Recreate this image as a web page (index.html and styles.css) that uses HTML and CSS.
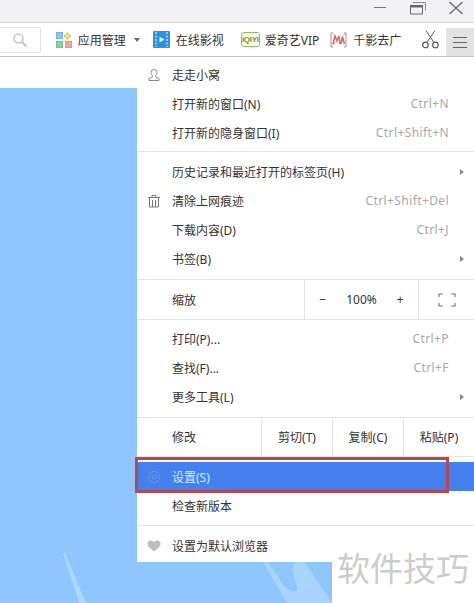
FILE: index.html
```html
<!doctype html>
<html lang="zh-CN">
  <head>
    <meta charset="UTF-8" />
    <title>设置</title>
    <link rel="stylesheet" href="styles.css">
  </head>

  <body>
    <div class="window">
      <div class="titlebar">
        <svg class="win-min" width="12" height="14" viewBox="0 0 12 14"><path d="M0 6.500h12" stroke="#777" stroke-width="1"/></svg>
        <svg class="win-max" width="16" height="14" viewBox="0 0 16 14"><path d="M3 1.500h12.500v8" fill="none" stroke="#888"/><path d="M.5 4.500h12v8.500H.5z" fill="#f2f2f4" stroke="#666"/><path d="M0 5.500h13" stroke="#666" stroke-width="2"/></svg>
        <svg class="win-close" width="14" height="14" viewBox="0 0 14 14"><path d="M.5 1l13 12M13.500 1L.5 13" stroke="#666" stroke-width="1.200" fill="none"/></svg>
      </div>

      <div class="toolbar">
        <div class="search-box">
          <svg width="16" height="16" viewBox="0 0 16 16"><circle cx="6.500" cy="6.500" r="4.500" fill="none" stroke="#c4c4c4" stroke-width="1.500"/><path d="M10 10l4.500 4.500" stroke="#c4c4c4" stroke-width="2"/></svg>
        </div>

        <div class="tool tool-apps">
          <svg width="16" height="16" viewBox="0 0 16 16">
            <rect x="0.300" y="0.300" width="6.500" height="6.500" fill="#8cc4ee" stroke="#5a9fd4" stroke-width=".6"/>
            <path d="M11.500 0.500l1.400 2.100 2.100 1.400-2.100 1.400-1.400 2.100-1.400-2.100-2.100-1.400 2.100-1.400z" fill="#f6e27a" stroke="#d4b63c" stroke-width=".8"/>
            <rect x="0.300" y="9.200" width="6.500" height="6.500" fill="#7fd6a2" stroke="#55b07d" stroke-width=".6"/>
            <rect x="9.200" y="9.200" width="6.500" height="6.500" fill="#f0a592" stroke="#d98470" stroke-width=".6"/>
          </svg>
          <span>应用管理</span>
          <i class="caret"></i>
        </div>

        <div class="tool tool-video">
          <svg width="17" height="17" viewBox="0 0 17 17">
            <rect width="17" height="17" rx="1" fill="#2b93dd"/>
            <path d="M3 1v15M14 1v15" stroke="#fff" stroke-width="1" stroke-dasharray="2 1.500"/>
            <path d="M6.500 5.500l5 3-5 3z" fill="#d5eefc"/>
          </svg>
          <span>在线影视</span>
        </div>

        <div class="tool tool-iqiyi">
          <span class="iqiyi-logo">iQIYI</span>
          <span>爱奇艺VIP</span>
        </div>

        <div class="tool tool-ad">
          <svg width="17" height="16" viewBox="0 0 17 16">
            <path d="M3 1H1v14h2M14 1h2v14h-2" fill="none" stroke="#999" stroke-width="1"/>
            <path d="M3 12l2-8 2 5 2-5 1 8M11 12l1.500-7 2 7" fill="none" stroke="#d46a6a" stroke-width="1.600"/>
            <path d="M2 14L15 2" stroke="#bbb" stroke-width="1"/>
          </svg>
          <span>千影去广</span>
        </div>

        <svg class="scissors" width="17" height="19" viewBox="0 0 17 19">
          <path d="M5 12.500L13 0.500M12 12.500L4 0.500" fill="none" stroke="#555" stroke-width="1"/>
          <circle cx="3.500" cy="15" r="2.800" fill="none" stroke="#555" stroke-width="1.200"/>
          <circle cx="13.500" cy="15" r="2.800" fill="none" stroke="#555" stroke-width="1.200"/>
        </svg>

        <div class="menu-btn">
          <svg width="16" height="12" viewBox="0 0 16 12"><path d="M1 1.500h14M1 6.500h14M1 11.500h14" stroke="#666" stroke-width="1"/></svg>
        </div>
      </div>

      <div class="content">
        <svg class="skyline" width="474" height="60" viewBox="0 0 474 60">
          <path d="M63 10l2 0 21 50h-7z" fill="#b5dcff" opacity=".75"/>
          <path d="M263 19h5l15 23 9 7 6-2-6-22 4-6h9l8 13 19 28h-45z" fill="#a9d4ff"/>
        </svg>
      </div>
    </div>

    <div class="menu">
      <div class="section section-first">
        <div class="row">
          <svg class="row-icon" width="14" height="14" viewBox="0 0 14 14"><path d="M7 1.500a3 3 0 0 1 3 3c0 1.500-.8 2.700-1.500 3.300v1l3.500 1.700v2H2v-2l3.500-1.700v-1C4.800 7.200 4 6 4 4.500a3 3 0 0 1 3-3z" fill="none" stroke="#888" stroke-width="1"/></svg>
          <span class="label">走走小窝</span>
        </div>
        <div class="row"><span class="label">打开新的窗口(N)</span><span class="keys">Ctrl+N</span></div>
        <div class="row"><span class="label">打开新的隐身窗口(I)</span><span class="keys">Ctrl+Shift+N</span></div>
      </div>

      <div class="section section-history">
        <div class="row"><span class="label">历史记录和最近打开的标签页(H)</span><i class="sub-arrow"></i></div>
        <div class="row">
          <svg class="row-icon" width="14" height="14" viewBox="0 0 14 14"><path d="M1 3.500h12M5 3.500V1.500h4v2M2.500 3.500v9.500h9V3.500M5.500 6v7M8.500 6v7" fill="none" stroke="#777" stroke-width="1"/></svg>
          <span class="label">清除上网痕迹</span><span class="keys">Ctrl+Shift+Del</span>
        </div>
        <div class="row"><span class="label">下载内容(D)</span><span class="keys">Ctrl+J</span></div>
        <div class="row"><span class="label">书签(B)</span><i class="sub-arrow"></i></div>
      </div>

      <div class="split-row zoom-row">
        <span class="label split-label">缩放</span>
        <div class="zoom-ctl"><span>−</span><span class="zoom-val">100%</span><span>+</span></div>
        <div class="zoom-full">
          <svg width="18" height="14" viewBox="0 0 18 14"><path d="M1 4V1h4M13 1h4v3M1 10v3h4M13 13h4v-3" fill="none" stroke="#777" stroke-width="1.200"/></svg>
        </div>
      </div>

      <div class="section section-tools">
        <div class="row"><span class="label">打印(P)...</span><span class="keys">Ctrl+P</span></div>
        <div class="row"><span class="label">查找(F)...</span><span class="keys">Ctrl+F</span></div>
        <div class="row"><span class="label">更多工具(L)</span><i class="sub-arrow"></i></div>
      </div>

      <div class="split-row edit-row">
        <span class="label split-label">修改</span>
        <div class="edit-btn">剪切(T)</div>
        <div class="edit-btn">复制(C)</div>
        <div class="edit-btn">粘贴(P)</div>
      </div>

      <div class="section section-settings">
        <div class="row row-active">
          <svg class="row-icon" width="14" height="14" viewBox="0 0 14 14"><circle cx="7" cy="7" r="5.500" fill="none" stroke="#6f8fc8" stroke-width="1.300"/><circle cx="7" cy="7" r="2" fill="none" stroke="#6f8fc8" stroke-width="1.200"/></svg>
          <span class="label">设置(S)</span>
        </div>
        <div class="row"><span class="label">检查新版本</span></div>
      </div>

      <div class="section section-last">
        <div class="row">
          <svg class="row-icon" width="14" height="12" viewBox="0 0 14 12"><path d="M7 11.500C3 8.500.5 6.500.5 3.800.5 1.800 2 .5 3.700.5 5 .5 6.300 1.200 7 2.300 7.700 1.200 9 .5 10.300.5 12 .5 13.500 1.800 13.500 3.800c0 2.700-2.500 4.700-6.500 7.700z" fill="#b9bccb"/></svg>
          <span class="label">设置为默认浏览器</span>
        </div>
      </div>
    </div>

    <div class="highlight"></div>
    <div class="watermark">软件技巧</div>
  </body>
</html>
```

FILE: styles.css
```css
html,
body {
  margin: 0;
  height: 100%;
  overflow: hidden;
}

body {
  position: relative;
  font-family: "Noto Sans", "Noto Sans CJK SC", sans-serif;
  font-size: 12px;
  color: #333;
  background-color: #fff;
}

.window {
  display: flex;
  flex-direction: column;
  height: 603px;
}

.titlebar {
  display: flex;
  justify-content: flex-end;
  align-items: flex-start;
  height: 23px;
  padding-top: 1px;
  padding-right: 11px;
  box-sizing: border-box;
  background-color: #f2f2f4;
  border-bottom: 1px solid #d8d8d8;
}

.win-min {
  margin-right: 24px;
}

.win-max {
  margin-right: 23px;
}

.toolbar {
  display: flex;
  align-items: center;
  height: 34px;
  box-sizing: border-box;
  background-color: #fff;
  border-bottom: 1px solid #c4c4c4;
  white-space: nowrap;
}

.search-box {
  display: flex;
  align-items: center;
  justify-content: flex-end;
  width: 41px;
  height: 26px;
  padding-right: 12px;
  box-sizing: border-box;
  border: 1px solid #e2e2e2;
  border-left: none;
  border-radius: 0 2px 2px 0;
}

.tool {
  display: flex;
  align-items: center;
}

.tool-apps {
  margin-left: 15px;
  gap: 6px;
}

.caret {
  width: 0;
  height: 0;
  margin-left: 2px;
  border-left: 3.500px solid transparent;
  border-right: 3.500px solid transparent;
  border-top: 4px solid #666;
}

.tool-video {
  margin-left: 13px;
  gap: 6px;
}

.tool-iqiyi {
  margin-left: 17px;
  gap: 5px;
}

.iqiyi-logo {
  width: 19px;
  height: 15px;
  line-height: 13px;
  text-align: center;
  overflow: hidden;
  font-family: "Liberation Sans", sans-serif;
  font-size: 8px;
  font-weight: bold;
  color: #5c9a1f;
  border: 1px solid #8cc63f;
  border-radius: 3px;
  box-sizing: border-box;
  letter-spacing: -0.3px;
}

.tool-ad {
  margin-left: 11px;
  gap: 6px;
}

.scissors {
  margin-left: 21px;
}

.menu-btn {
  display: flex;
  align-items: center;
  justify-content: center;
  width: 28px;
  height: 28px;
  margin-left: 7px;
  margin-top: 5px;
  background-color: #e2e2e2;
}

.content {
  flex: 1;
  position: relative;
  margin-top: 31px;
  background-color: #8fc6ff;
}

.skyline {
  position: absolute;
  left: 0;
  bottom: 0;
}

.menu {
  position: absolute;
  left: 137px;
  top: 57px;
  width: 337px;
  height: 505px;
  background-color: #fff;
  color: #333;
}

.section {
  border-bottom: 1px solid #e4e4e4;
}

.section-first {
  padding: 3px 0 4px;
}

.section-history {
  padding: 5px 0 6px;
}

.section-tools {
  padding: 4px 0 6px;
}

.section-settings {
  padding: 5px 0;
}

.section-last {
  padding-top: 5px;
  border-bottom: none;
}

.row {
  position: relative;
  display: flex;
  align-items: center;
  height: 29px;
  padding: 0 25px 0 35px;
}

.row-icon {
  position: absolute;
  left: 10px;
}

.label {
  flex: 1;
  white-space: nowrap;
}

.keys {
  color: #a8a8a8;
  letter-spacing: 0.4px;
  white-space: nowrap;
}

.sub-arrow {
  position: absolute;
  right: 10px;
  width: 0;
  height: 0;
  border-top: 3.500px solid transparent;
  border-bottom: 3.500px solid transparent;
  border-left: 4px solid #888;
}

.row-active {
  background-color: #4480ee;
  color: #d6ecff;
}

.split-row {
  display: flex;
  align-items: stretch;
  border-bottom: 1px solid #e4e4e4;
}

.split-label {
  display: flex;
  align-items: center;
  padding-left: 35px;
}

.zoom-row {
  height: 40px;
  box-sizing: border-box;
}

.zoom-ctl {
  display: flex;
  align-items: center;
  justify-content: center;
  gap: 20px;
  width: 114px;
  border-left: 1px solid #e4e4e4;
  box-sizing: border-box;
}

.zoom-full {
  display: flex;
  align-items: center;
  justify-content: center;
  width: 56px;
  border-left: 1px solid #e4e4e4;
  box-sizing: border-box;
}

.edit-row {
  height: 39px;
  box-sizing: border-box;
}

.edit-btn {
  display: flex;
  align-items: center;
  justify-content: center;
  width: 71px;
  border-left: 1px solid #e4e4e4;
  box-sizing: border-box;
  white-space: nowrap;
}

.highlight {
  position: absolute;
  left: 135px;
  top: 457px;
  width: 314px;
  height: 36px;
  box-sizing: border-box;
  border: 3px solid #b5474f;
}

.watermark {
  position: absolute;
  left: 332px;
  top: 548px;
  width: 142px;
  height: 55px;
  padding-left: 5px;
  box-sizing: border-box;
  background-color: #fff;
  font-family: "Noto Sans CJK SC", sans-serif;
  font-size: 33px;
  line-height: 38px;
  color: #cccccc;
  white-space: nowrap;
}
```
